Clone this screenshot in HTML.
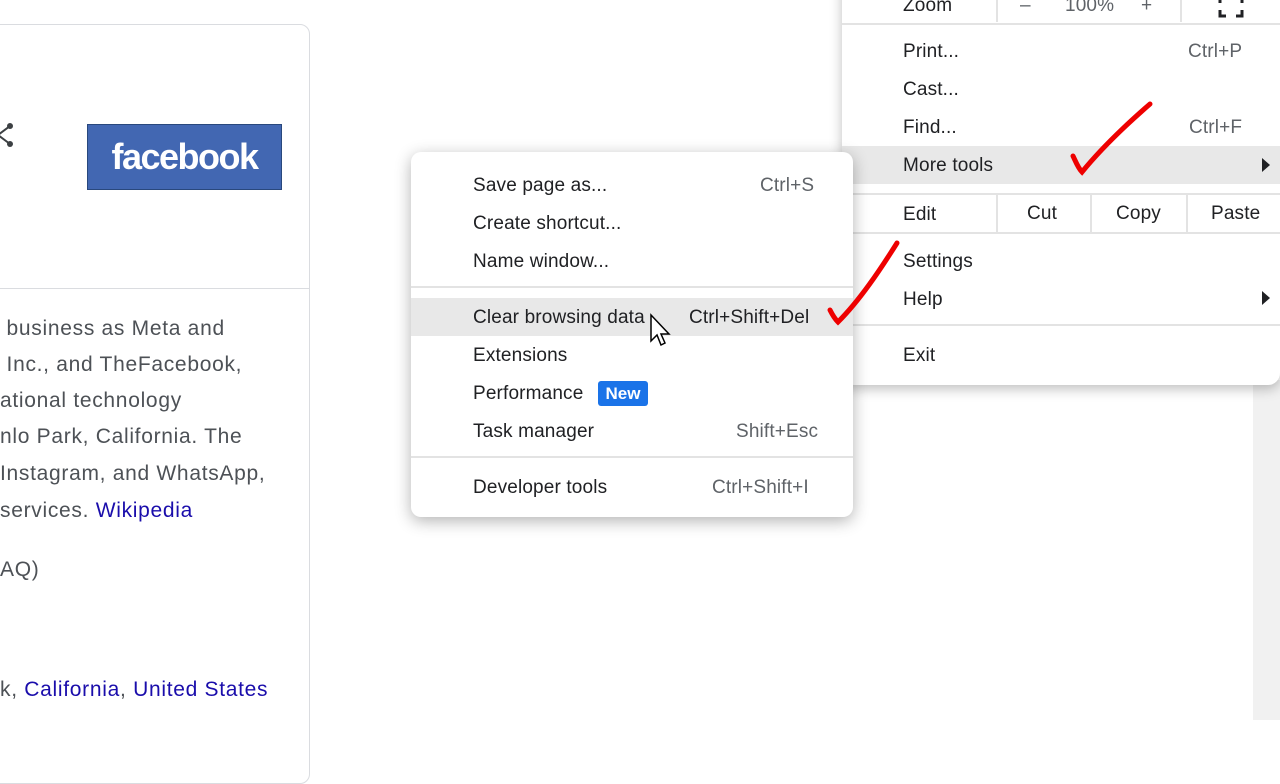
<!DOCTYPE html>
<html><head><meta charset="utf-8"><style>
*{margin:0;padding:0;box-sizing:border-box}
body{width:1280px;height:720px;overflow:hidden;background:#fff;position:relative;font-family:"Liberation Sans",sans-serif}
.a{position:absolute;white-space:nowrap}
.card{position:absolute;left:-20px;top:24px;width:330px;height:760px;border:1px solid #dadce0;border-radius:10px;background:#fff}
.bt{font-size:21px;color:#4d5156;line-height:22px;letter-spacing:0.7px}
.lk{color:#1a0dab}
.m{font-size:19px;color:#202124;line-height:22px;letter-spacing:0.15px}
.sc{color:#5f6368}
.big{position:absolute;left:842px;top:-20px;width:438px;height:405px;background:#fff;border-radius:0 0 12px 12px;box-shadow:0 4px 12px rgba(0,0,0,.25)}
.sub{position:absolute;left:411px;top:152px;width:442px;height:365px;background:#fff;border-radius:10px;box-shadow:0 4px 16px rgba(0,0,0,.3)}
.hl{position:absolute;background:#e8e8e8}
.hr{position:absolute;height:2px;background:#e3e3e3}
.vr{position:absolute;width:2px;background:#e3e3e3}
</style></head><body>
<div style="position:absolute;left:1253px;top:380px;width:27px;height:340px;background:#f1f1f1"></div>
<div class="card"></div>
<div class="hr" style="left:0;top:288px;width:309px;height:1px;background:#dadce0"></div>
<svg class="a" style="left:0;top:120px" width="18" height="30" viewBox="0 0 18 30"><path d="M-2 15 L10 6 M-2 15 L10 24" stroke="#3c4043" stroke-width="2" fill="none"/><circle cx="10" cy="6" r="3" fill="#3c4043"/><circle cx="10" cy="24" r="3" fill="#3c4043"/></svg>
<div class="a" style="left:87px;top:124px;width:195px;height:66px;background:#4267b2;border:1px solid #29487d;color:#fff;font-weight:bold;font-size:36px;line-height:64px;text-align:center;letter-spacing:-1.5px">facebook</div>
<div class="a bt" style="left:0;top:318px">&nbsp;business as Meta and</div>
<div class="a bt" style="left:0;top:354px">&nbsp;Inc., and TheFacebook,</div>
<div class="a bt" style="left:0;top:390px">ational technology</div>
<div class="a bt" style="left:0;top:426px">nlo Park, California. The</div>
<div class="a bt" style="left:0;top:463px">Instagram, and WhatsApp,</div>
<div class="a bt" style="left:0;top:500px">services. <span class="lk">Wikipedia</span></div>
<div class="a bt" style="left:0;top:559px">AQ)</div>
<div class="a bt" style="left:0;top:679px">k, <span class="lk">California</span>, <span class="lk">United States</span></div>

<div class="big"></div>
<div class="a m" style="left:903px;top:-5px">Zoom</div>
<div class="a m sc" style="left:1020px;top:-5px">–</div>
<div class="a m sc" style="left:1065px;top:-5px">100%</div>
<div class="a m sc" style="left:1141px;top:-5px">+</div>
<div class="vr" style="left:996px;top:0;height:22px"></div>
<div class="vr" style="left:1180px;top:0;height:22px"></div>
<svg class="a" style="left:1218px;top:0" width="26" height="18"><path d="M2 10 V16 H8 M18 16 H24 V10 M2 0 V3 M24 0 V3" stroke="#202124" stroke-width="3" fill="none"/></svg>
<div class="hr" style="left:842px;top:23px;width:438px"></div>
<div class="a m" style="left:903px;top:41px">Print...</div><div class="a m sc" style="left:1188px;top:41px">Ctrl+P</div>
<div class="a m" style="left:903px;top:79px">Cast...</div>
<div class="a m" style="left:903px;top:117px">Find...</div><div class="a m sc" style="left:1189px;top:117px">Ctrl+F</div>
<div class="hl" style="left:842px;top:146px;width:438px;height:38px"></div>
<div class="a m" style="left:903px;top:155px">More tools</div>
<div class="a" style="left:1262px;top:158px;width:0;height:0;border-left:8px solid #202124;border-top:7px solid transparent;border-bottom:7px solid transparent"></div>
<div class="hr" style="left:842px;top:193px;width:438px"></div>
<div class="hr" style="left:842px;top:232px;width:438px"></div>
<div class="vr" style="left:996px;top:193px;height:40px"></div>
<div class="vr" style="left:1090px;top:193px;height:40px"></div>
<div class="vr" style="left:1186px;top:193px;height:40px"></div>
<div class="a m" style="left:903px;top:204px">Edit</div>
<div class="a m" style="left:1027px;top:203px">Cut</div>
<div class="a m" style="left:1116px;top:203px">Copy</div>
<div class="a m" style="left:1211px;top:203px">Paste</div>
<div class="a m" style="left:903px;top:251px">Settings</div>
<div class="a m" style="left:903px;top:289px">Help</div>
<div class="a" style="left:1262px;top:291px;width:0;height:0;border-left:8px solid #202124;border-top:7px solid transparent;border-bottom:7px solid transparent"></div>
<div class="hr" style="left:842px;top:324px;width:438px"></div>
<div class="a m" style="left:903px;top:345px">Exit</div>

<div class="sub"></div>
<div class="a m" style="left:473px;top:175px">Save page as...</div><div class="a m sc" style="left:760px;top:175px">Ctrl+S</div>
<div class="a m" style="left:473px;top:213px">Create shortcut...</div>
<div class="a m" style="left:473px;top:251px">Name window...</div>
<div class="hr" style="left:411px;top:286px;width:442px"></div>
<div class="hl" style="left:411px;top:298px;width:442px;height:38px"></div>
<div class="a m" style="left:473px;top:307px">Clear browsing data</div><div class="a m" style="left:689px;top:307px">Ctrl+Shift+Del</div>
<div class="a m" style="left:473px;top:345px">Extensions</div>
<div class="a m" style="left:473px;top:383px">Performance</div>
<div class="a" style="left:598px;top:381px;width:50px;height:25px;background:#1a73e8;border-radius:3px;color:#fff;font-size:17px;font-weight:bold;line-height:25px;text-align:center">New</div>
<div class="a m" style="left:473px;top:421px">Task manager</div><div class="a m sc" style="left:736px;top:421px">Shift+Esc</div>
<div class="hr" style="left:411px;top:456px;width:442px"></div>
<div class="a m" style="left:473px;top:477px">Developer tools</div><div class="a m sc" style="left:712px;top:477px">Ctrl+Shift+I</div>
<svg class="a" style="left:649px;top:313px" width="24" height="36" viewBox="0 0 24 36"><path d="M2 2 L2 28 L8 22 L12 32 L16 30 L12 21 L20 21 Z" fill="#fff" stroke="#000" stroke-width="1.5"/></svg>
<svg class="a" style="left:0;top:0" width="1280" height="720"><path d="M1150 104 C1120 130 1100 150 1082 172 C1078 168 1075 160 1073 156" stroke="#e00" stroke-width="5" fill="none" stroke-linecap="round"/><path d="M897 243 C880 270 860 300 838 322 C834 318 832 314 830 310" stroke="#e00" stroke-width="5" fill="none" stroke-linecap="round"/></svg>
</body></html>
